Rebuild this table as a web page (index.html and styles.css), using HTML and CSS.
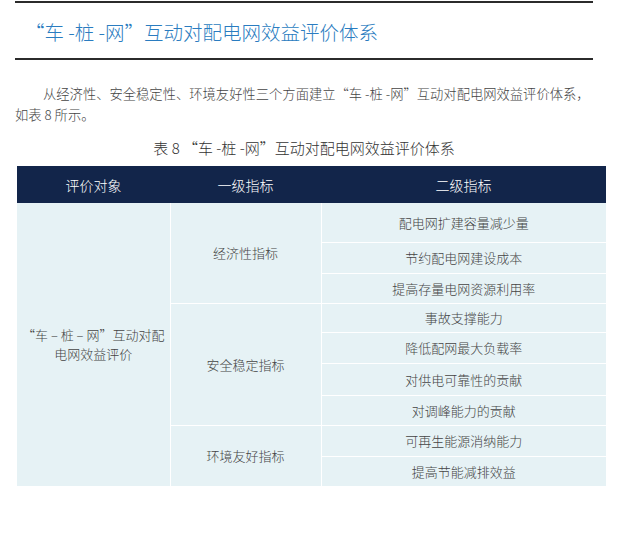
FILE: index.html
```html
<!DOCTYPE html>
<html lang="zh-CN">
<head>
<meta charset="utf-8">
<title>“车 -桩 -网”互动对配电网效益评价体系</title>
<link rel="stylesheet" href="styles.css">
</head>
<body>
<div class="page">
  <div class="rule"></div>
  <h1 class="title">“车 -桩 -网”互动对配电网效益评价体系</h1>
  <div class="rule"></div>
  <p class="para">从经济性、安全稳定性、环境友好性三个方面建立“车 -桩 -网”互动对配电网效益评价体系，如表 8 所示。</p>
  <p class="caption">表 8 “车 -桩 -网”互动对配电网效益评价体系</p>
</div>
<table class="eval">
  <thead>
    <tr class="head">
      <th class="c1">评价对象</th>
      <th class="c2">一级指标</th>
      <th class="c3">二级指标</th>
    </tr>
  </thead>
  <tbody>
    <tr class="h39">
      <td class="c1" rowspan="9">“车 – 桩 – 网”互动对配<br>电网效益评价</td>
      <td class="c2" rowspan="3">经济性指标</td>
      <td class="c3">配电网扩建容量减少量</td>
    </tr>
    <tr class="h31"><td class="c3">节约配电网建设成本</td></tr>
    <tr class="h30"><td class="c3">提高存量电网资源利用率</td></tr>
    <tr class="h29">
      <td class="c2" rowspan="4">安全稳定指标</td>
      <td class="c3">事故支撑能力</td>
    </tr>
    <tr class="h31"><td class="c3">降低配网最大负载率</td></tr>
    <tr class="h32"><td class="c3">对供电可靠性的贡献</td></tr>
    <tr class="h30"><td class="c3">对调峰能力的贡献</td></tr>
    <tr class="h31">
      <td class="c2" rowspan="2">环境友好指标</td>
      <td class="c3">可再生能源消纳能力</td>
    </tr>
    <tr class="h30"><td class="c3">提高节能减排效益</td></tr>
  </tbody>
</table>
</body>
</html>
```
FILE: styles.css
```css
html, body {
  margin: 0;
  padding: 0;
  background: #ffffff;
}
body {
  font-family: "Noto Sans CJK SC", "Liberation Sans", sans-serif;
  font-weight: 300;
  color: #444;
}
.page {
  width: 578px;
  margin-left: 15px;
  padding-top: 1px;
}
.rule {
  height: 2px;
  background: #2b2b2b;
}
.title {
  margin: 0;
  padding: 15px 0 12px 10px;
  font-size: 19.5px;
  line-height: 28px;
  font-weight: 300;
  color: #2a7cc0;
  white-space: nowrap;
}
.para {
  width: 580px;
  margin: 23px 0 0 0;
  font-size: 13.3px;
  line-height: 21px;
  text-indent: 28px;
  color: #444;
}
.caption {
  margin: 13px 0 0 0;
  font-size: 15px;
  line-height: 20px;
  text-align: center;
  color: #333;
}
.eval {
  margin: 8px 0 0 17px;
  border-collapse: collapse;
  width: 589px;
  table-layout: fixed;
  font-size: 13px;
}
.eval th {
  background: #12254a;
  color: #fff;
  font-weight: 300;
  font-size: 14px;
  height: 37px;
  padding: 0;
  border: 0;
  text-align: center;
}
.eval th.c1 { width: 153px; }
.eval th.c2 { width: 151px; }
.eval td {
  background: #e6f2f5;
  border: 1px solid #fff;
  border-top: 0;
  text-align: center;
  vertical-align: middle;
  padding: 0 4px;
  color: #444;
  line-height: 19px;
}
.eval td.c1 {
  border-left: 0;
  padding: 0;
  white-space: nowrap;
}
.eval td.c3 { border-right: 0; }
.h39 { height: 39px; }
.h32 { height: 32px; }
.h31 { height: 31px; }
.h30 { height: 30px; }
.h29 { height: 29px; }
```
